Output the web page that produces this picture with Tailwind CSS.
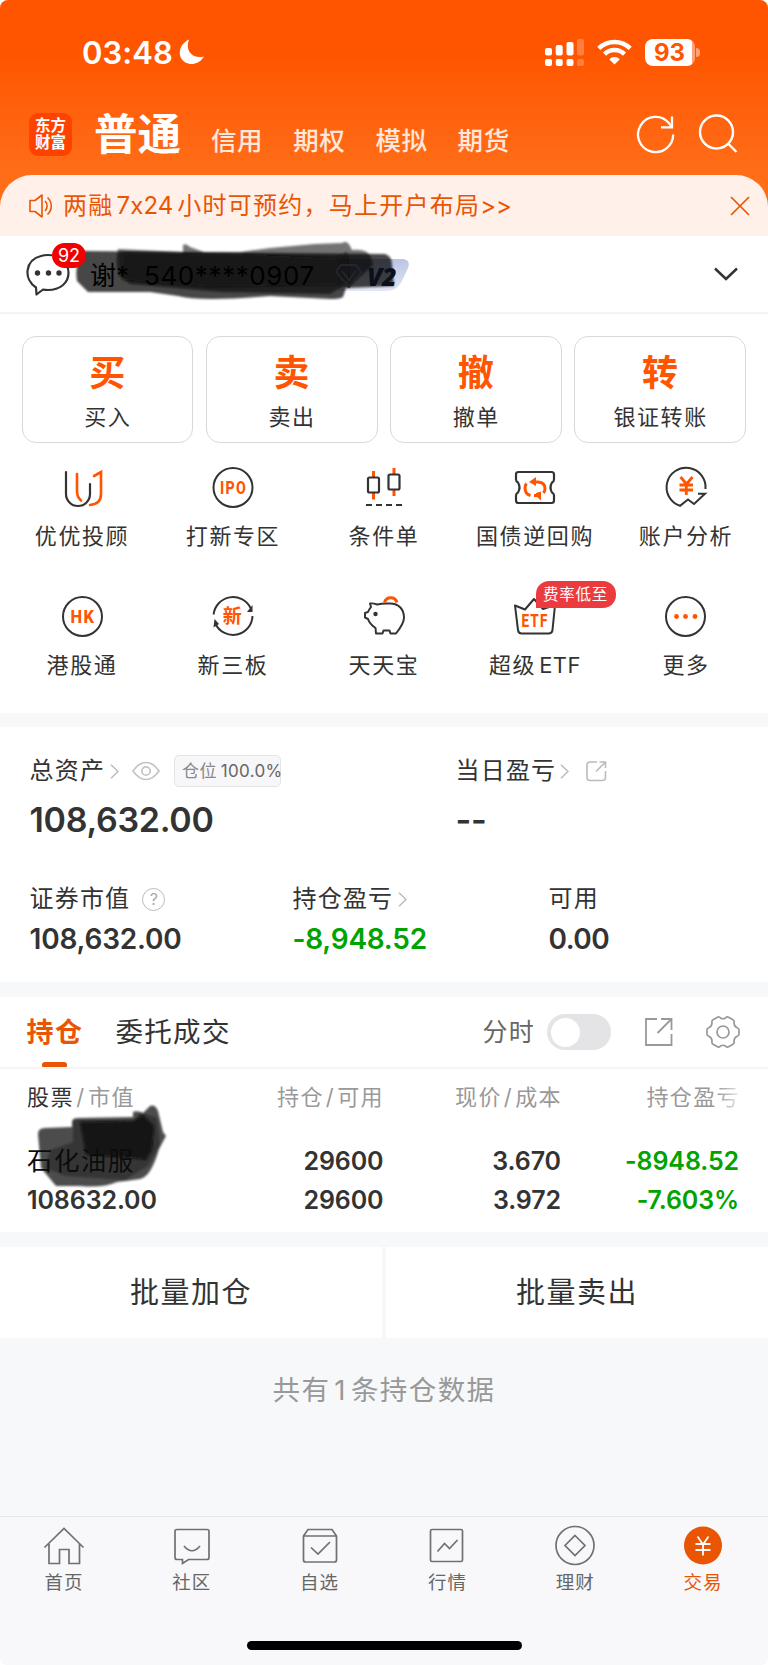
<!DOCTYPE html>
<html lang="zh-CN">
<head>
  <meta charset="UTF-8" />
  <meta name="viewport" content="width=device-width, initial-scale=1.0"/>
  <title>东方财富 - 交易</title>
  <script src="https://cdn.jsdelivr.net/npm/@tailwindcss/browser@4"></script>
</head>
<body class="bg-white">
<div class="w-[768px] h-[1665px] flex flex-col overflow-hidden rounded-[8px] bg-[#f7f8fa] font-['Inter','Noto_Sans_CJK_SC',sans-serif] text-[#333] whitespace-nowrap">

  <!-- status bar + header -->
  <header class="h-[215px] -mb-10 shrink-0 bg-linear-to-b from-[#ff5500] from-25% to-[#ff6d17] to-80% text-white">
    <div class="h-[104px] flex items-center pl-[82px] pr-[68px]">
      <span class="text-[31px] font-semibold tracking-[0.1px] leading-none">03:48</span>
      <svg class="w-[26px] h-[26px] ml-[6px]" viewBox="0 0 26 26" fill="#fff"><path d="M10 .5C2.500 4 -1.500 12 2 19c4 7.500 16.500 9 23-1.500C14 20.500 5.500 12 10 .5z"/></svg>
      <svg class="w-[39px] h-[27px] ml-auto" viewBox="0 0 39 27" fill="#fff">
        <rect x="0" y="9" width="7" height="7.500" rx="2"/><rect x="10.700" y="6" width="7" height="10.500" rx="2"/><rect x="21.500" y="3" width="7" height="13.500" rx="2"/><rect x="32" y="0" width="7" height="16.500" rx="2" opacity=".25"/>
        <rect x="0" y="20" width="7" height="7" rx="2"/><rect x="10.700" y="20" width="7" height="7" rx="2"/><rect x="21.500" y="20" width="7" height="7" rx="2"/><rect x="32" y="20" width="7" height="7" rx="2" opacity=".25"/>
      </svg>
      <svg class="w-[35px] h-[26px] ml-[13px]" viewBox="0 0 35 26" fill="none" stroke="#fff" stroke-width="4.500"><path d="M1.800 9.300a22.500 22.500 0 0 1 31.400 0"/><path d="M7.500 15.200a14.300 14.300 0 0 1 20 0"/><path d="M17.500 25.500l-5.300-5.300a7.600 7.600 0 0 1 10.600 0z" fill="#fff" stroke="none"/></svg>
      <div class="flex items-center ml-[13px]">
        <div class="w-[50px] h-[27px] rounded-[8px] bg-linear-to-r from-white from-93% to-white/45 to-93% text-[#ff5500] text-[24px] font-bold leading-[27px] text-center">93</div>
        <div class="w-[4px] h-[9px] ml-[1.500px] rounded-r-full bg-white/45"></div>
      </div>
    </div>
    <div class="h-[60px] flex items-center pl-[29px] pr-[30px]">
      <div class="w-[43px] h-[43px] rounded-[9px] bg-[#ff4200] flex items-center justify-center text-[15.500px] leading-[17.500px] font-bold text-center">东方<br>财富</div>
      <div class="ml-[22px] text-[43.500px] font-bold leading-[58px]">普通</div>
      <nav class="flex gap-[30px] ml-[30px] mt-[14px] text-[25.500px] font-medium tracking-[0.600px] leading-none text-white/85">
        <span>信用</span><span>期权</span><span>模拟</span><span>期货</span>
      </nav>
      <svg class="w-[40px] h-[40px] ml-auto" viewBox="0 0 40 40" fill="none" stroke="#fff" stroke-width="2.300"><path d="M37.200 20.500a17.600 17.600 0 1 1-4.300-11.500L36 13"/><path d="M36 2.500V13.300H25"/></svg>
      <svg class="w-[40px] h-[40px] ml-[22px]" viewBox="0 0 40 40" fill="none" stroke="#fff" stroke-width="2.400"><circle cx="18.500" cy="18" r="16.500"/><path d="M30 29.500l8.500 8.500"/></svg>
    </div>
  </header>

  <!-- notice -->
  <div class="h-[61px] shrink-0 rounded-t-[32px] bg-[#fff1ea] flex items-center pl-[28px] pr-[18px] text-[#ea5504]">
    <svg class="w-[25px] h-[26px]" viewBox="0 0 25 26" fill="none" stroke="currentColor" stroke-width="1.600"><path d="M2 7.500h5l7-5.500v22l-7-5.500H2z" stroke-linejoin="round"/><path d="M17 8a7 7 0 0 1 0 10M19.500 4.500a11.500 11.500 0 0 1 0 17"/></svg>
    <span class="ml-[10px] text-[24px] tracking-[1.250px] leading-none">两融<span class="ml-[3px] mr-[4px] tracking-[0.100px]">7x24</span>小时可预约，马上开户布局<span class="tracking-[-0.200px]">&gt;&gt;</span></span>
    <svg class="w-[20px] h-[20px] ml-auto" viewBox="0 0 20 20" fill="none" stroke="currentColor" stroke-width="1.700"><path d="M1 1l18 18M19 1L1 19"/></svg>
  </div>

  <!-- account row -->
  <div class="h-[78px] shrink-0 relative bg-white border-b-2 border-[#f3f4f6] flex items-center pl-[26px] pr-[30px]">
    <svg class="w-[45px] h-[45px]" viewBox="0 0 45 45" fill="none" stroke="#333" stroke-width="2.200"><path d="M10 35.500C-3 27 -1 8 15 4q3-1 7-1c12 0 20.500 8 20.500 18S34 38 22 38q-3 0-5-.5L10.500 42.500z" stroke-linejoin="round"/><g fill="#333" stroke="none"><circle cx="11.500" cy="21" r="2.700"/><circle cx="22.500" cy="21" r="2.700"/><circle cx="33" cy="21" r="2.700"/></g></svg>
    <span class="absolute left-[52px] top-[7px] z-20 w-[34px] h-[25px] rounded-full bg-[#f00000] text-white text-[18px] leading-[25px] text-center">92</span>
    <div class="absolute left-[330px] top-[23px] w-[79px] h-[32px]">
      <svg class="w-full h-full" viewBox="0 0 79 32"><defs><linearGradient id="vip" x1="0" y1="0" x2="0" y2="1"><stop offset="0" stop-color="#b9c3e3"/><stop offset="1" stop-color="#e4e7f3"/></linearGradient></defs><path d="M8 0h64c6 0 8 4 6 9l-6 13c-3 6-8 10-16 10H8z" fill="url(#vip)"/></svg>
    </div>
    <!-- brush strokes over the account name -->
    <svg class="absolute left-[70px] top-0 w-[340px] h-[78px]" viewBox="70 236 340 78" fill="#080808">
      <defs><filter id="soft" x="-5%" y="-10%" width="110%" height="120%"><feGaussianBlur stdDeviation="1.200"/></filter></defs>
      <g filter="url(#soft)">
        <path opacity=".72" d="M84 251L385 254Q392 256 392 265L394 286L346 288L343 297Q340 299 330 299L270 296Q200 302 178 296L150 292L88 292L77 281Q74 262 84 251z"/>
        <path opacity=".55" d="M118 249L183 252V245Q186 243 190 247L204 252H240L270 248L315 244L342 243Q347 240 350 246L352 250Q367 248 371 257L373 265L348 288L344 286L330 294L220 292L130 284L119 276Q115 262 118 249z"/>
        <path opacity=".65" d="M122 252L242 254L335 258L347 252L349 278L335 285L210 287L122 280z"/>
      </g>
    </svg>
    <div class="relative ml-[19px] mt-[3px] flex items-center text-[26px] leading-none text-black">
      <span>谢*</span>
      <span class="ml-[15px] tracking-[0.600px]">540****0907</span>
    </div>
    <div class="absolute left-[335px] top-[27px] flex items-center text-[#0c101c]">
      <svg class="w-[27px] h-[26px]" viewBox="0 0 27 26" fill="none" stroke="#24252c" stroke-width="2"><path d="M6 2h15l5 7-12 15L1 9z"/><path d="M7 8l7 9 7-9"/></svg>
      <span class="ml-[5px] text-[25px] font-extrabold italic leading-[26px] tracking-[-0.500px] font-['Open_Sans',sans-serif]">V2</span>
    </div>
    <svg class="w-[24px] h-[14px] ml-auto" viewBox="0 0 24 14" fill="none" stroke="#333" stroke-width="2.500"><path d="M1 1.500l11 10.500L23 1.500"/></svg>
  </div>

  <!-- main actions -->
  <section class="h-[399px] shrink-0 bg-white pt-[22px]">
    <div class="grid grid-cols-4 gap-[12.500px] pl-[21.500px] pr-[22px]">
      <div class="h-[107px] rounded-[14px] border border-[#d9d9dc] flex flex-col items-center">
        <b class="mt-[15px] text-[36px] leading-[42px] text-[#ff5500]">买</b><span class="mt-[9px] -mr-px text-[22px] tracking-[1.600px] leading-[28px]">买入</span>
      </div>
      <div class="h-[107px] rounded-[14px] border border-[#d9d9dc] flex flex-col items-center">
        <b class="mt-[15px] text-[36px] leading-[42px] text-[#ff5500]">卖</b><span class="mt-[9px] -mr-px text-[22px] tracking-[1.600px] leading-[28px]">卖出</span>
      </div>
      <div class="h-[107px] rounded-[14px] border border-[#d9d9dc] flex flex-col items-center">
        <b class="mt-[15px] text-[36px] leading-[42px] text-[#ff5500]">撤</b><span class="mt-[9px] -mr-px text-[22px] tracking-[1.600px] leading-[28px]">撤单</span>
      </div>
      <div class="h-[107px] rounded-[14px] border border-[#d9d9dc] flex flex-col items-center">
        <b class="mt-[15px] text-[36px] leading-[42px] text-[#ff5500]">转</b><span class="mt-[9px] -mr-px text-[22px] tracking-[1.600px] leading-[28px]">银证转账</span>
      </div>
    </div>

    <div class="grid grid-cols-5 gap-y-[36px] px-[6.500px] mt-[22px] text-[22px] tracking-[1.600px] leading-[28px] text-center">
      <div class="flex flex-col items-center">
        <svg class="w-[44px] h-[44px]" viewBox="0 0 44 44" fill="none" stroke-width="2.200" stroke-linecap="round"><path d="M6 7v22a12 12 0 0 0 24 0V19" stroke="#333"/><path d="M17 9v17q0 6 4 9.500M34 11l7-4v22q0 10-11 11" stroke="#ff5500" stroke-width="2.600"/></svg>
        <span class="mt-[13px]">优优投顾</span>
      </div>
      <div class="flex flex-col items-center">
        <svg class="w-[44px] h-[44px]" viewBox="0 0 44 44"><circle cx="22" cy="22.500" r="19.500" fill="none" stroke="#333" stroke-width="2"/><text x="9" y="28.500" font-family="Roboto" font-size="18" font-weight="800" textLength="27" lengthAdjust="spacingAndGlyphs" fill="#ff5500">IPO</text></svg>
        <span class="mt-[13px]">打新专区</span>
      </div>
      <div class="flex flex-col items-center">
        <svg class="w-[44px] h-[44px]" viewBox="0 0 44 44" fill="none" stroke="#333" stroke-width="2.200"><path d="M11.500 6v6M11.500 28v6.500M32 3v6M32 25v6" stroke="#ff5500" stroke-width="3"/><rect x="6" y="12.500" width="11" height="15" rx="1.500"/><rect x="26.500" y="9.500" width="11" height="15" rx="1.500"/><path d="M4 40h36" stroke-dasharray="6 4"/></svg>
        <span class="mt-[13px]">条件单</span>
      </div>
      <div class="flex flex-col items-center">
        <svg class="w-[44px] h-[44px]" viewBox="0 0 44 44" fill="none" stroke="#333" stroke-width="2.200"><path d="M3 9.500Q3 7 5.500 7h33Q41 7 41 9.500v5q0 2-2 3-3 5 0 10 2 1 2 3v5q0 2.500-2.500 2.500h-33Q3 38 3 35.500v-5q0-2 2-3 3-5 0-10-2-1-2-3z"/><g stroke="#ff5500" stroke-width="3"><path d="M17.500 30.500q-5.500-1.500-5.500-7.500 0-2.500 1.500-4.500M19 17h6q7 .5 7 6.500 0 2.500-1.500 4.500M27 30.500h-6"/></g><path d="M16 17l7-5v9zM28 35.500v-9l-5 1.500v3z" fill="#ff5500" stroke="none"/></svg>
        <span class="mt-[13px]">国债逆回购</span>
      </div>
      <div class="flex flex-col items-center">
        <svg class="w-[44px] h-[44px]" viewBox="0 0 44 44" fill="none" stroke="#333" stroke-width="2"><path d="M41.500 24A19.500 19.500 0 1 0 16 40.800l8-6.300 6 4.500L41 28.700h-7"/><path d="M16.500 12l6 7 6-7M15.500 20h13.500M15.500 25h13.500M22.300 19v11" stroke="#ff5500" stroke-width="2.800"/></svg>
        <span class="mt-[13px]">账户分析</span>
      </div>

      <div class="flex flex-col items-center pt-[8px]">
        <svg class="w-[44px] h-[44px]" viewBox="0 0 44 44"><circle cx="22.500" cy="22.500" r="19.500" fill="none" stroke="#333" stroke-width="2"/><text x="10.500" y="28.500" font-family="Roboto" font-size="18" font-weight="800" textLength="25" lengthAdjust="spacingAndGlyphs" fill="#ff5500">HK</text></svg>
        <span class="mt-[13px]">港股通</span>
      </div>
      <div class="flex flex-col items-center pt-[8px]">
        <svg class="w-[44px] h-[44px]" viewBox="0 0 44 44"><g fill="none" stroke="#333" stroke-width="2"><path d="M2.600 20.500A19.500 19.500 0 0 1 39.500 14M41.500 22A19.500 19.500 0 0 1 4.500 30"/></g><path d="M41.500 11v7h-5.500zM2.500 33.500l1-8.500 4.500 5z" fill="#333"/><text x="22" y="29" text-anchor="middle" font-family="Noto Sans CJK SC" font-size="19" font-weight="bold" fill="#ff5500">新</text></svg>
        <span class="mt-[13px]">新三板</span>
      </div>
      <div class="flex flex-col items-center pt-[8px]">
        <svg class="w-[44px] h-[44px]" viewBox="0 0 44 44" fill="none" stroke="#333" stroke-width="2" stroke-linejoin="round"><path d="M8 9.500q3-.5 7 1 5-1 9-1h4c9 0 14 6 14 14 0 6-4 11-8 16h-5.500l-1-3h-6l-1 3H14l-.5-5.500C9 31 7 28 6 25l-3-1.500V19l3-1q1-2.500 3-5z"/><circle cx="13.500" cy="20" r="2.200" fill="#333" stroke="none"/><path d="M22.500 8.500a6.500 6.500 0 0 1 12.500 0" stroke="#ff5500" stroke-width="3"/></svg>
        <span class="mt-[13px]">天天宝</span>
      </div>
      <div class="flex flex-col items-center pt-[8px] relative">
        <svg class="w-[44px] h-[44px]" viewBox="0 0 44 44"><path d="M2 11.500l10 4L21 5l9 10 12-4-2.500 25q-.5 3.500-4 3.500h-27Q5.500 39.500 5 36z" fill="none" stroke="#333" stroke-width="2" stroke-linejoin="round"/><text x="8.500" y="32.800" font-family="Roboto" font-size="18.500" font-weight="800" fill="#ff5500" textLength="27" lengthAdjust="spacingAndGlyphs">ETF</text></svg>
        <span class="absolute left-[76px] top-[-5px] w-[80px] h-[27px] rounded-[13px] rounded-bl-none bg-[#ec3b3f] text-white text-[15.500px] tracking-[0.700px] leading-[27px]">费率低至</span>
        <span class="mt-[13px]">超级<span class="ml-[3px] tracking-[0.500px]">ETF</span></span>
      </div>
      <div class="flex flex-col items-center pt-[8px]">
        <svg class="w-[44px] h-[44px]" viewBox="0 0 44 44"><circle cx="21.500" cy="22.500" r="19.500" fill="none" stroke="#333" stroke-width="2"/><g fill="#ff5500"><circle cx="12.500" cy="22.500" r="2.400"/><circle cx="21.500" cy="22.500" r="2.400"/><circle cx="31" cy="22.500" r="2.400"/></g></svg>
        <span class="mt-[13px]">更多</span>
      </div>
    </div>
  </section>

  <!-- assets -->
  <section class="h-[255px] shrink-0 mt-[14px] bg-white pl-[29.500px] pt-[27px] text-[24px] tracking-[1.200px]">
    <div class="flex">
      <div class="w-[426px]">
        <div class="h-[34px] flex items-center">
          <span>总资产</span>
          <svg class="w-[9px] h-[15px] ml-[5px]" viewBox="0 0 9 15" fill="none" stroke="#bbb" stroke-width="1.500"><path d="M1 .7l7 6.800-7 6.800"/></svg>
          <svg class="w-[28px] h-[20px] ml-[13px]" viewBox="0 0 28 20" fill="none" stroke="#c4c4c4" stroke-width="1.700"><path d="M1 10Q7 1.500 14 1.500T27 10q-6 8.500-13 8.500T1 10z"/><circle cx="14" cy="10" r="4.200"/></svg>
          <div class="w-[107px] h-[32px] ml-[14px] pl-[7px] rounded-[5px] border border-[#e3e3e8] bg-[#f7f7fa] text-[17px] tracking-[0.300px] leading-[31px] text-[#888]">仓位 <span class="text-[#666] -ml-px">100.0%</span></div>
        </div>
        <div class="mt-[12px] text-[34px] font-semibold tracking-[-0.300px] leading-[40px]">108,632.00</div>
      </div>
      <div>
        <div class="h-[34px] flex items-center">
          <span>当日盈亏</span>
          <svg class="w-[9px] h-[15px] ml-[4px]" viewBox="0 0 9 15" fill="none" stroke="#bbb" stroke-width="1.500"><path d="M1 .7l7 6.800-7 6.800"/></svg>
          <svg class="w-[22px] h-[22px] ml-[16px]" viewBox="0 0 22 22" fill="none" stroke="#bbb" stroke-width="1.600"><path d="M12 2H5Q2 2 2 5v12q0 3.500 3 3.500h12q3.500 0 3.500-3.500v-6M14.500 2h6v6M20 2.500L11 11.500"/></svg>
        </div>
        <div class="mt-[12px] text-[34px] font-semibold tracking-[-0.300px] leading-[40px]">--</div>
      </div>
    </div>
    <div class="flex mt-[42px]">
      <div class="w-[263px]">
        <div class="h-[34px] flex items-center"><span>证券市值</span>
          <span class="w-[23px] h-[23px] ml-[12px] rounded-full border-[1.500px] border-[#bbb] text-[#aaa] text-[16px] leading-[20px] tracking-[0px] text-center">?</span>
        </div>
        <div class="mt-[6px] text-[28px] font-semibold tracking-[-0.200px] leading-[34px]">108,632.00</div>
      </div>
      <div class="w-[256px]">
        <div class="h-[34px] flex items-center"><span>持仓盈亏</span>
          <svg class="w-[9px] h-[15px] ml-[5px]" viewBox="0 0 9 15" fill="none" stroke="#bbb" stroke-width="1.500"><path d="M1 .7l7 6.800-7 6.800"/></svg>
        </div>
        <div class="mt-[6px] text-[28px] font-semibold tracking-[-0.250px] leading-[34px] text-[#00a300]">-8,948.52</div>
      </div>
      <div>
        <div class="h-[34px] flex items-center">可用</div>
        <div class="mt-[6px] text-[28px] font-semibold tracking-[-0.500px] leading-[34px]">0.00</div>
      </div>
    </div>
  </section>

  <!-- positions -->
  <section class="h-[235px] shrink-0 mt-[15px] bg-white">
    <div class="h-[72px] border-b-2 border-[#f5f5f7] flex items-center pl-[26.500px] pr-[28px]">
      <div class="relative h-full text-[27px] tracking-[1.500px] leading-[72px] font-bold text-[#ea5504]">持仓<i class="absolute left-[15px] bottom-0 w-[25px] h-[5px] rounded-t-[3px] rounded-b-[1px] bg-[#ea5504]"></i></div>
      <div class="ml-[32px] text-[27.500px] tracking-[1.300px] leading-[72px]">委托成交</div>
      <span class="ml-auto mt-[2px] text-[25px] tracking-[1.200px] text-[#666]">分时</span>
      <div class="w-[64px] h-[36px] ml-[12px] p-[3.500px] rounded-full bg-[#e4e4e7]"><div class="w-[29px] h-[29px] rounded-full bg-white"></div></div>
      <svg class="w-[30px] h-[30px] ml-[33px]" viewBox="0 0 30 30" fill="none" stroke="#999" stroke-width="1.800"><path d="M13 2H2v26h25.500V17M17 2h10.500v11M27 2.500L13.500 16"/></svg>
      <svg class="w-[34px] h-[34px] ml-[32px]" viewBox="0 0 34 34" fill="none" stroke="#999" stroke-width="1.700" stroke-linejoin="round"><path d="M11 2.500q2-1.500 3.500.5 2.500 1.500 5 0 1.500-2 3.500-.5l4 2.300q1.500 1 1 3 0 3.500 3 5 2 .7 2 2v4.400q0 1.500-2 2-3 1.500-3 5 .5 2-1 3l-4 2.300q-2 1.500-3.500-.5-2.500-1.500-5 0-1.500 2-3.500.5l-4-2.300q-1.500-1-1-3 0-3.500-3-5-2-.7-2-2v-4.400q0-1.500 2-2 3-1.500 3-5-.5-2 1-3z"/><circle cx="17" cy="17" r="6"/></svg>
    </div>
    <div class="relative grid grid-cols-[190px_167px_178px_178px] pl-[27px] text-[22px] tracking-[1.400px] leading-[30px] pt-[13px] text-right text-[#999]">
      <div class="text-left"><span class="text-[#333]">股票</span><span class="mx-[2.500px]">/</span>市值</div>
      <div>持仓<span class="mx-[2px]">/</span>可用</div>
      <div>现价<span class="mx-[2px]">/</span>成本</div>
      <div>持仓盈<span class="bg-linear-to-r from-[#999] to-[#999]/20 bg-clip-text text-transparent">亏</span></div>
    </div>
    <div class="relative grid grid-cols-[190px_166.500px_177.500px_178px] pl-[27px] mt-[30px] text-[25px] tracking-[-0.100px] leading-[38.500px] font-semibold text-right">
      <!-- brush strokes over the stock name -->
      <svg class="absolute left-[30px] top-[-42px] w-[145px] h-[90px]" viewBox="30 1100 145 90" fill="#080808">
        <g filter="url(#soft)">
          <path opacity=".7" d="M38 1134Q38 1128 45 1128L72 1127V1122Q72 1118 78 1118L133 1117V1112Q137 1110 143 1113L150 1106Q155 1104 158 1111L163 1132L166 1136L159 1149Q151 1177 140 1179Q127 1181 117 1182Q103 1188 80 1186L56 1186L41 1168z"/>
          <path opacity=".3" d="M73 1120L135 1120L140 1112L157 1118L160 1146L148 1166L125 1180L65 1176L45 1168L50 1150L73 1142z"/>
          <path opacity=".85" d="M80 1122L133 1121L143 1115L154 1126L152 1150L146 1160L132 1158L86 1155z"/>
        </g>
      </svg>
      <div class="relative text-left text-[25.500px] font-normal tracking-[1.400px] text-[#0c0c0c]">石化油服</div><div>29600</div><div>3.670</div><div class="text-[#00a300]">-8948.52</div>
      <div class="relative text-left">108632.00</div><div>29600</div><div>3.972</div><div class="text-[#00a300]">-7.603%</div>
    </div>
  </section>

  <!-- batch actions -->
  <div class="h-[89px] shrink-0 mt-[14.500px] grid grid-cols-2 gap-[4px] text-[29px] tracking-[1.500px] leading-[91px] text-center">
    <div class="bg-white">批量加仓</div>
    <div class="bg-white">批量卖出</div>
  </div>
  <p class="mt-[35px] text-[27.500px] tracking-[1.400px] leading-[38px] text-center text-[#999]">共有<span class="mx-[4px]">1</span>条持仓数据</p>

  <!-- tab bar -->
  <footer class="mt-auto h-[149.500px] shrink-0 border-t border-[#e6e6ea] bg-[#f8f8fb] flex flex-col items-center">
    <nav class="w-full h-[124px] grid grid-cols-6 pt-[8px] pr-px text-[18.500px] tracking-[1px] leading-[24px] text-[#666] text-center">
      <div class="flex flex-col items-center">
        <svg class="w-[42px] h-[42px]" viewBox="0 0 42 42" fill="none" stroke="#707070" stroke-width="1.700"><path d="M1.500 22.500L21 3.500l19.500 19M6 19v19.500h10.500V24.500H26v14h10.500V19"/></svg><span class="mt-[3px]">首页</span>
      </div>
      <div class="flex flex-col items-center">
        <svg class="w-[42px] h-[42px]" viewBox="0 0 42 42" fill="none" stroke="#707070" stroke-width="1.700"><path d="M6 4.500h30q2 0 2 2v26q0 2-2 2H17.500l-6 4v-4H6q-2 0-2-2v-26q0-2 2-2z"/><path d="M13 21q8 9.500 16 0"/></svg><span class="mt-[3px]">社区</span>
      </div>
      <div class="flex flex-col items-center">
        <svg class="w-[42px] h-[42px]" viewBox="0 0 42 42" fill="none" stroke="#707070" stroke-width="1.700"><path d="M4.500 11L9 4.500h24l4.500 6.500v24q0 2-2 2h-29q-2 0-2-2zM4.500 11h33M12 22.500l7 6.500 12-12"/></svg><span class="mt-[3px]">自选</span>
      </div>
      <div class="flex flex-col items-center">
        <svg class="w-[42px] h-[42px]" viewBox="0 0 42 42" fill="none" stroke="#707070" stroke-width="1.700"><rect x="4.500" y="4.500" width="32" height="32" rx="1.500"/><path d="M11.500 26.500l7-8 5 5 8-8.500"/></svg><span class="mt-[3px]">行情</span>
      </div>
      <div class="flex flex-col items-center">
        <svg class="w-[42px] h-[42px]" viewBox="0 0 42 42" fill="none" stroke="#707070" stroke-width="1.700"><circle cx="21" cy="20.500" r="19"/><path d="M21 10.500l10 10-10 10-10-10z"/></svg><span class="mt-[3px]">理财</span>
      </div>
      <div class="flex flex-col items-center text-[#ea5504]">
        <svg class="w-[42px] h-[42px]" viewBox="0 0 42 42" fill="none" stroke="#fff" stroke-width="1.800"><circle cx="21" cy="20.500" r="19" fill="#ea5504" stroke="none"/><path d="M15.500 11.500l5.500 8 5.500-8M13.500 19h15M13.500 25h15M21 19v11.500"/></svg><span class="mt-[3px]">交易</span>
      </div>
    </nav>
    <div class="w-[275px] h-[9.500px] rounded-full bg-black"></div>
  </footer>
</div>
</body>
</html>
